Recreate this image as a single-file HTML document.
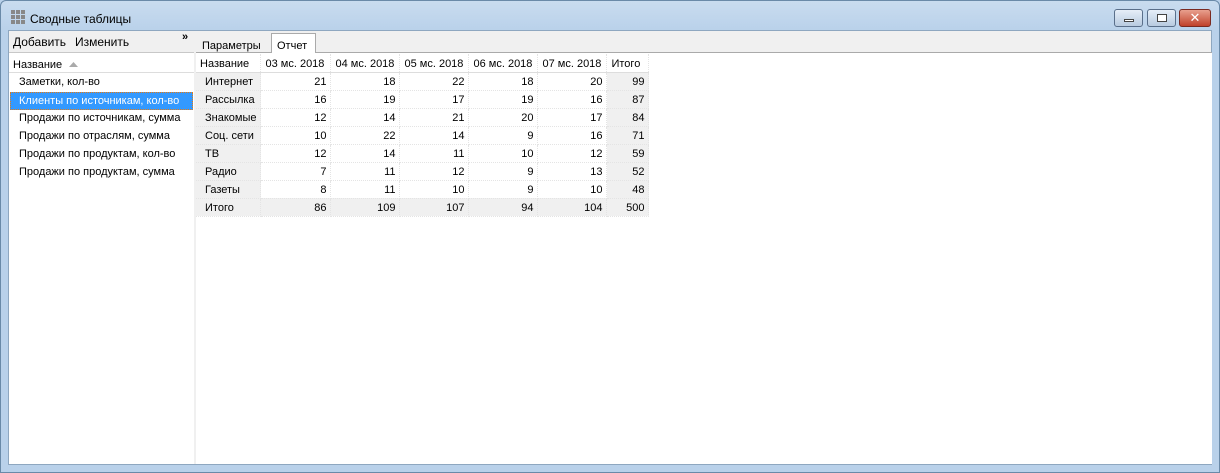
<!DOCTYPE html>
<html><head><meta charset="utf-8"><style>
*{margin:0;padding:0;box-sizing:border-box}
body{width:1220px;height:473px;background:#b9d1ea;font-family:"Liberation Sans","DejaVu Sans",sans-serif;font-size:11px;color:#000;position:relative;overflow:hidden}
.frame{position:absolute;left:0;top:0;width:1220px;height:473px;border:1px solid #6a8aa8;border-radius:6px 6px 0 0;background:linear-gradient(#c9dcef,#b9d1ea 30px)}
.title{position:absolute;left:30px;top:12px;font-size:12px}
.inner{position:absolute;left:8px;top:30px;width:1204px;height:435px;background:#f0f0f0;border:1px solid #8ea7c0}
.left{position:absolute;left:0;top:0;width:185px;height:433px;background:#fff}
.tb{position:absolute;left:0;top:0;width:185px;height:22px;background:#f0f0f0;border-bottom:1px solid #c8c8c8}
.right{position:absolute;left:187px;top:22px;width:1016px;height:411px;background:#fff}
.abs{position:absolute;white-space:nowrap}
.btn{position:absolute;top:9px;height:18px;border:1px solid #5a6f8a;border-radius:3px;background:linear-gradient(#e6eef8,#b8cbe0)}
table{border-collapse:collapse;position:absolute;left:0;top:1px}
td{height:18px;padding:1px 4px 0;border-right:1px dotted #e4e4e4;border-bottom:1px dotted #e4e4e4;text-align:right}
td.n{text-align:left;background:#f0f0f0;padding-left:9px}
tr.h td{background:#fff;text-align:left;padding-left:4px;padding-top:2px;border-bottom:1px solid #ddd}
tr.t td{background:#f0f0f0}
td.s{background:#f0f0f0}
</style></head><body>
<div class="frame"></div>
<svg class="abs" style="left:11px;top:10px" width="16" height="16"><g fill="#888"><rect x="0" y="0" width="4" height="4"/><rect x="5" y="0" width="4" height="4"/><rect x="10" y="0" width="4" height="4"/><rect x="0" y="5" width="4" height="4"/><rect x="5" y="5" width="4" height="4"/><rect x="10" y="5" width="4" height="4"/><rect x="0" y="10" width="4" height="4"/><rect x="5" y="10" width="4" height="4"/><rect x="10" y="10" width="4" height="4"/></g></svg>
<div class="title">Сводные таблицы</div>
<div class="btn" style="left:1114px;width:29px"><div class="abs" style="left:9px;top:9px;width:10px;height:3px;background:#fff;border:1px solid #444"></div></div>
<div class="btn" style="left:1147px;width:29px"><div class="abs" style="left:9px;top:4px;width:10px;height:8px;border:1px solid #444;background:#fff"></div></div>
<div class="btn" style="left:1179px;width:32px;background:linear-gradient(#e8a08e,#c0412a);border-color:#7a2a20;color:#fff;font-weight:bold;font-size:13px;text-align:center;line-height:16px">✕</div>
<div class="inner">
<div class="left">
<div class="tb"><span class="abs" style="left:4px;top:4px;font-size:12px">Добавить</span><span class="abs" style="left:66px;top:4px;font-size:12px">Изменить</span><span class="abs" style="left:173px;top:0px;font-weight:bold">»</span></div>
<div class="abs" style="left:0;top:24px;width:185px;height:18px;border-bottom:1px solid #ddd"><span class="abs" style="left:4px;top:4px">Название</span><svg class="abs" style="left:60px;top:7px" width="9" height="6"><path d="M0 5L4.5 0L9 5Z" fill="#aaa"/></svg></div>
<div class="abs" style="left:10px;top:45px">Заметки, кол-во</div>
<div class="abs" style="left:1px;top:61px;width:183px;height:18px;background:#3399ff;border:1px dotted #e87a10;color:#fff;padding:2px 0 0 8px">Клиенты по источникам, кол-во</div>
<div class="abs" style="left:10px;top:81px">Продажи по источникам, сумма</div>
<div class="abs" style="left:10px;top:99px">Продажи по отраслям, сумма</div>
<div class="abs" style="left:10px;top:117px">Продажи по продуктам, кол-во</div>
<div class="abs" style="left:10px;top:135px">Продажи по продуктам, сумма</div>
</div>
<div class="abs" style="left:187px;top:21px;width:1016px;height:1px;background:#aaa"></div>
<div class="abs" style="left:187px;top:4px;width:72px;height:18px;padding:5px 0 0 6px">Параметры</div>
<div class="abs" style="left:262px;top:2px;width:45px;height:21px;background:#fff;border:1px solid #aaa;border-bottom:none;padding:6px 0 0 5px">Отчет</div>
<div class="right">
<table>
<tr class="h"><td style="width:64px">Название</td><td style="width:70px">03 мс. 2018</td><td style="width:69px">04 мс. 2018</td><td style="width:69px">05 мс. 2018</td><td style="width:69px">06 мс. 2018</td><td style="width:69px">07 мс. 2018</td><td style="width:42px">Итого</td></tr>
<tr><td class="n">Интернет</td><td>21</td><td>18</td><td>22</td><td>18</td><td>20</td><td class="s">99</td></tr>
<tr><td class="n">Рассылка</td><td>16</td><td>19</td><td>17</td><td>19</td><td>16</td><td class="s">87</td></tr>
<tr><td class="n">Знакомые</td><td>12</td><td>14</td><td>21</td><td>20</td><td>17</td><td class="s">84</td></tr>
<tr><td class="n">Соц. сети</td><td>10</td><td>22</td><td>14</td><td>9</td><td>16</td><td class="s">71</td></tr>
<tr><td class="n">ТВ</td><td>12</td><td>14</td><td>11</td><td>10</td><td>12</td><td class="s">59</td></tr>
<tr><td class="n">Радио</td><td>7</td><td>11</td><td>12</td><td>9</td><td>13</td><td class="s">52</td></tr>
<tr><td class="n">Газеты</td><td>8</td><td>11</td><td>10</td><td>9</td><td>10</td><td class="s">48</td></tr>
<tr class="t"><td class="n">Итого</td><td>86</td><td>109</td><td>107</td><td>94</td><td>104</td><td>500</td></tr>
</table>
</div>
</div>
</body></html>
